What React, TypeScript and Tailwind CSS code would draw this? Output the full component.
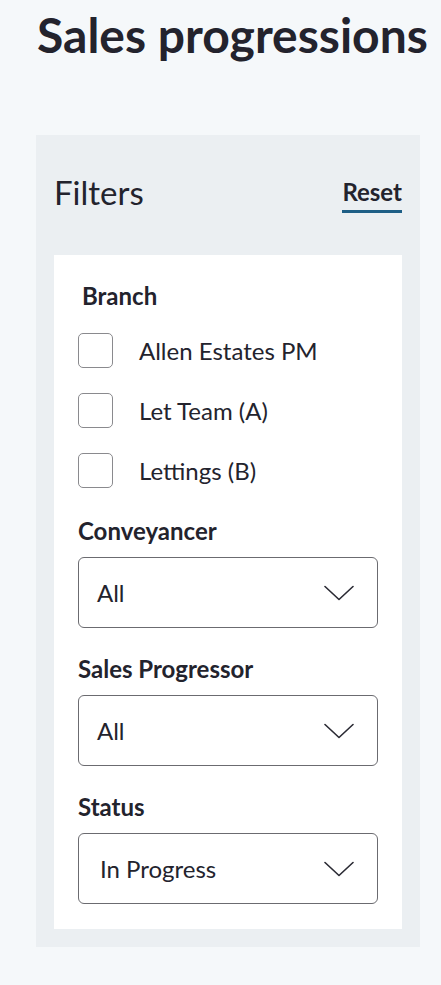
import React from "react";

function Chevron() {
  return (
    <svg width="30" height="16" viewBox="0 0 30 16" fill="none" className="shrink-0">
      <path d="M1 1.5 L15 14.5 L29 1.5" stroke="#2a2a33" strokeWidth="1.6" strokeLinecap="round" strokeLinejoin="round" />
    </svg>
  );
}

function Field({ label, value, first, indent }: { label: string; value: string; first?: boolean; indent?: boolean }) {
  return (
    <div className={first ? "mt-[31px]" : "mt-[29px]"}>
      <label className="block text-[24px] font-bold leading-none text-[#23232d]">{label}</label>
      <div className="mt-[14px] flex h-[71px] w-[300px] items-center justify-between rounded-[6px] border border-[#6b6b70] bg-white pl-[18px] pr-[23px]">
        <span className={(indent ? "pl-[3px] " : "") + "text-[24px] leading-none text-[#23232d]"}>{value}</span>
        <Chevron />
      </div>
    </div>
  );
}

function Check({ label }: { label: string }) {
  return (
    <div className="flex items-center gap-[26px]">
      <div className="h-[35px] w-[35px] shrink-0 rounded-[5px] border border-[#8a8a8e] bg-white" />
      <span className="text-[24px] leading-none text-[#23232d]">{label}</span>
    </div>
  );
}

export default function App() {
  return (
    <div className="min-h-screen bg-[#f5f8fa] font-['Lato',sans-serif]">
      <h1 className="pl-[37px] pt-[11px] text-[48px] font-bold leading-none text-[#23232d]">Sales progressions</h1>
      <div className="ml-[36px] mt-[76px] w-[384px] bg-[#ebeff2] px-[18px] pb-[18px] pt-[40px]">
        <div className="flex items-start justify-between">
          <h2 className="pt-[1px] text-[33px] font-normal leading-none text-[#23232d]">Filters</h2>
          <button className="mt-[5px] border-b-[3px] border-[#1e5f86] pb-[6px] text-[24px] font-bold leading-none text-[#23232d]">
            Reset
          </button>
        </div>
        <div className="mt-[42px] bg-white px-[24px] pb-[25px] pt-[29px]">
          <div className="pl-[4px] text-[24px] font-bold leading-none text-[#23232d]">Branch</div>
          <div className="mt-[25px] flex flex-col gap-[25px]">
            <Check label="Allen Estates PM" />
            <Check label="Let Team (A)" />
            <Check label="Lettings (B)" />
          </div>
          <Field label="Conveyancer" value="All" first />
          <Field label="Sales Progressor" value="All" />
          <Field label="Status" value="In Progress" indent />
        </div>
      </div>
    </div>
  );
}
